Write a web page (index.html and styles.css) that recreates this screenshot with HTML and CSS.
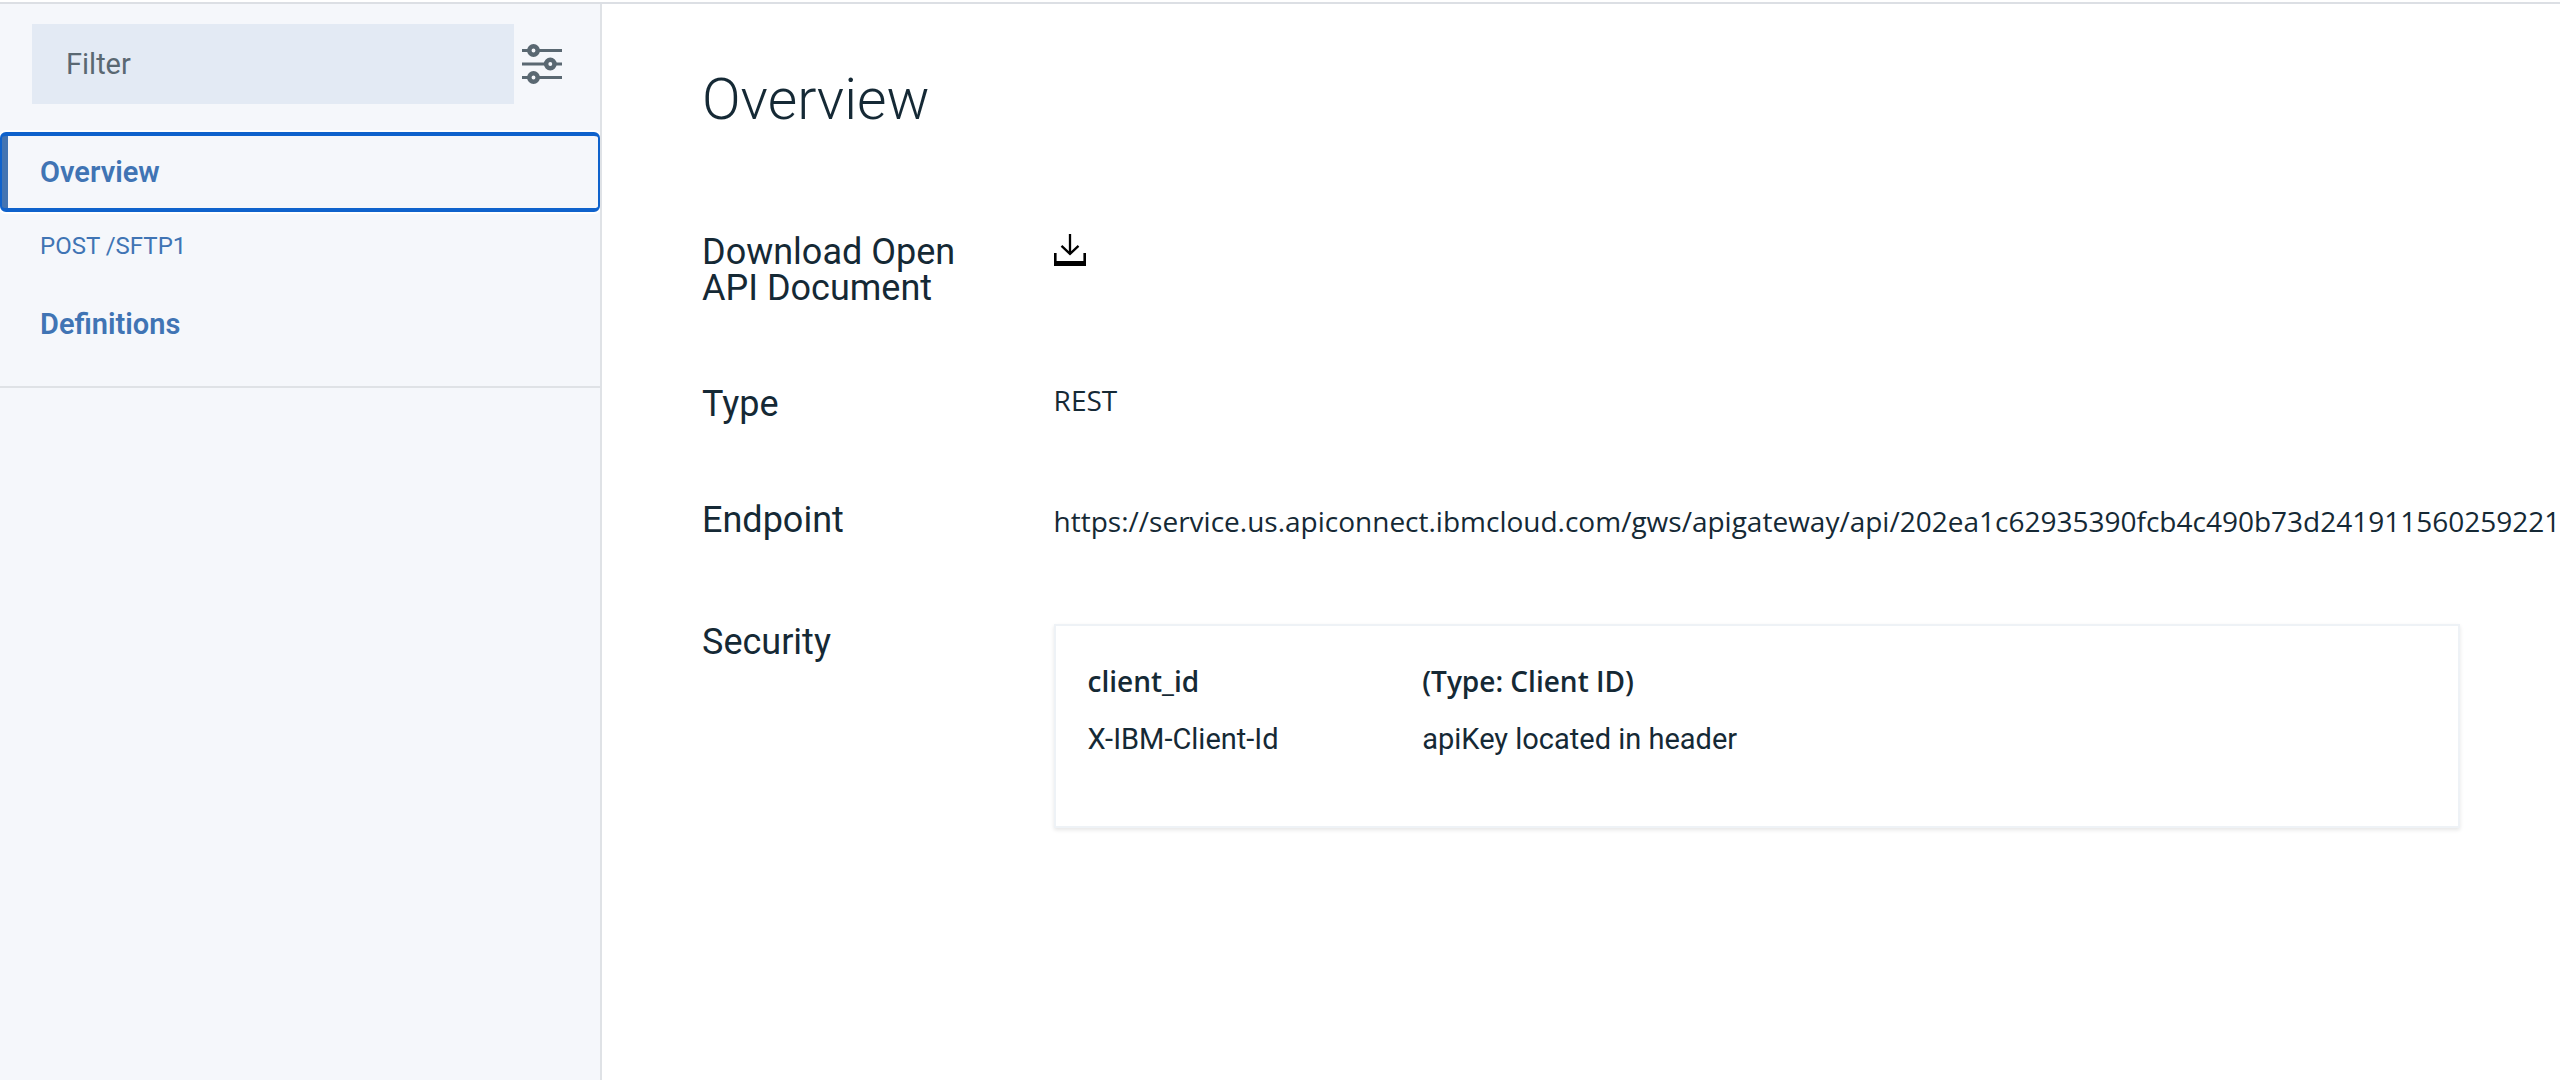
FILE: index.html
```html
<!DOCTYPE html>
<html lang="en">
<head>
  <meta charset="utf-8">
  <meta name="viewport" content="width=device-width, initial-scale=1">
  <title>Overview</title>
  <link rel="stylesheet" href="styles.css">
</head>
<body>
  <div class="explorer">
    <aside class="sidebar">
      <form class="filter">
        <input class="filter-input" type="text" placeholder="Filter" aria-label="Filter">
        <button class="filter-button" type="button" aria-label="Filter options">
          <svg class="filter-icon" viewBox="0 0 40 40" aria-hidden="true">
            <path d="M0 6.5h40M0 20h40M0 33.500h40" stroke="#5a6872" stroke-width="3"/>
            <g fill="#f5f7fb" stroke="#5a6872" stroke-width="4.500">
              <circle cx="11.500" cy="6.500" r="4.200"/>
              <circle cx="28.300" cy="20" r="4.200"/>
              <circle cx="11.500" cy="33.500" r="4.200"/>
            </g>
          </svg>
        </button>
      </form>
      <nav class="nav">
        <a class="nav-link nav-link-active" href="#overview">Overview</a>
        <a class="nav-link nav-operation" href="#sftp1">POST /SFTP1</a>
        <a class="nav-link" href="#definitions">Definitions</a>
      </nav>
    </aside>
    <main class="content" id="overview">
      <h1 class="title">Overview</h1>
      <dl class="details">
        <div class="detail">
          <dt class="label">Download Open<br>API Document</dt>
          <dd class="value">
            <button class="download" type="button" aria-label="Download Open API Document">
              <svg class="download-icon" viewBox="0 0 32 32" aria-hidden="true">
                <path d="M16 0v19.500M7.500 11.800l8.500 8 8.500-8" fill="none" stroke="#000" stroke-width="2.300"/>
                <path d="M0 19h2.600v8h26.800v-8H32v13H0z"/>
              </svg>
            </button>
          </dd>
        </div>
        <div class="detail">
          <dt class="label">Type</dt>
          <dd class="value">REST</dd>
        </div>
        <div class="detail">
          <dt class="label">Endpoint</dt>
          <dd class="value value-url">https://service.us.apiconnect.ibmcloud.com/gws/apigateway/api/202ea1c62935390fcb4c490b73d241911560259221</dd>
        </div>
        <div class="detail">
          <dt class="label">Security</dt>
          <dd class="value card">
            <table class="security">
              <thead>
                <tr><th>client_id</th><th>(Type: Client ID)</th></tr>
              </thead>
              <tbody>
                <tr><td>X-IBM-Client-Id</td><td>apiKey located in header</td></tr>
              </tbody>
            </table>
          </dd>
        </div>
      </dl>
    </main>
  </div>
</body>
</html>
```
FILE: styles.css
```css
* {
  box-sizing: border-box;
}

body {
  margin: 0;
  padding-top: 2px;
  background: #fff;
  color: #152935;
  font-family: Roboto, "Liberation Sans", sans-serif;
  font-size: 29px;
  overflow-x: hidden;
}

.explorer {
  display: flex;
  min-height: calc(100vh - 2px);
  border-top: 2px solid #dcdfe4;
}

/* Sidebar */

.sidebar {
  flex: 0 0 602px;
  border-right: 2px solid #dfe2e6;
  background: #f5f7fb;
  overflow: hidden;
}

.filter {
  display: flex;
  align-items: center;
  gap: 8px;
  padding: 20px 38px 28px 32px;
}

.filter-input {
  flex: 1;
  min-width: 0;
  height: 80px;
  padding: 0 34px;
  border: 0;
  background: #e3eaf4;
  color: #152935;
  font: inherit;
}

.filter-input::placeholder {
  color: #5a6872;
  opacity: 1;
}

.filter-button,
.download {
  display: block;
  padding: 0;
  border: 0;
  background: none;
}

.filter-icon {
  display: block;
  width: 40px;
  height: 40px;
}

.nav {
  display: flex;
  flex-direction: column;
  padding-bottom: 22px;
  border-bottom: 2px solid #dfe2e6;
}

.nav-link {
  padding: 0 40px;
  color: #4074b4;
  font-weight: 600;
  line-height: 80px;
  text-decoration: none;
}

.nav-link-active {
  padding: 0 38px;
  border: 4px solid #0f62cc;
  border-width: 4px 2px;
  border-radius: 6px;
  background: linear-gradient(to right, #4374b2 6px, transparent 6px);
  box-shadow: 0 0 0 2px #fff;
  line-height: 72px;
}

.nav-operation {
  margin-bottom: 4px;
  font-size: 24px;
  font-weight: 400;
  line-height: 68px;
}

/* Content */

.content {
  flex: 1;
  min-width: 0;
  padding: 60px 100px;
}

.title {
  margin: 0 0 98px;
  font-size: 57px;
  font-weight: 300;
  line-height: 72px;
}

.details {
  display: grid;
  gap: 80px;
  margin: 0;
}

.detail {
  display: grid;
  grid-template-columns: minmax(0, 1fr) minmax(0, 4fr);
}

.label {
  font-size: 36px;
  line-height: 36px;
}

.value {
  margin: 0;
  font-family: "Open Sans", "Noto Sans", sans-serif;
  font-size: 28px;
  line-height: 28px;
}

.value-url {
  padding-bottom: 4px;
  line-height: 38px;
  white-space: nowrap;
}

.download-icon {
  display: block;
  width: 32px;
  height: 32px;
}

.card {
  padding: 34px 32px 66px;
  border: 2px solid #eef2f6;
  box-shadow: 0 2px 4px rgba(0, 0, 0, 0.1);
  line-height: 42px;
}

.security {
  width: 100%;
  border-collapse: collapse;
  table-layout: fixed;
  text-align: left;
}

.security th,
.security td {
  padding: 0;
}

.security th:first-child {
  width: 25%;
}

.security th {
  padding-bottom: 16px;
  font-weight: 600;
}

.security td {
  font-family: Roboto, "Liberation Sans", sans-serif;
  font-size: 29px;
}
```
